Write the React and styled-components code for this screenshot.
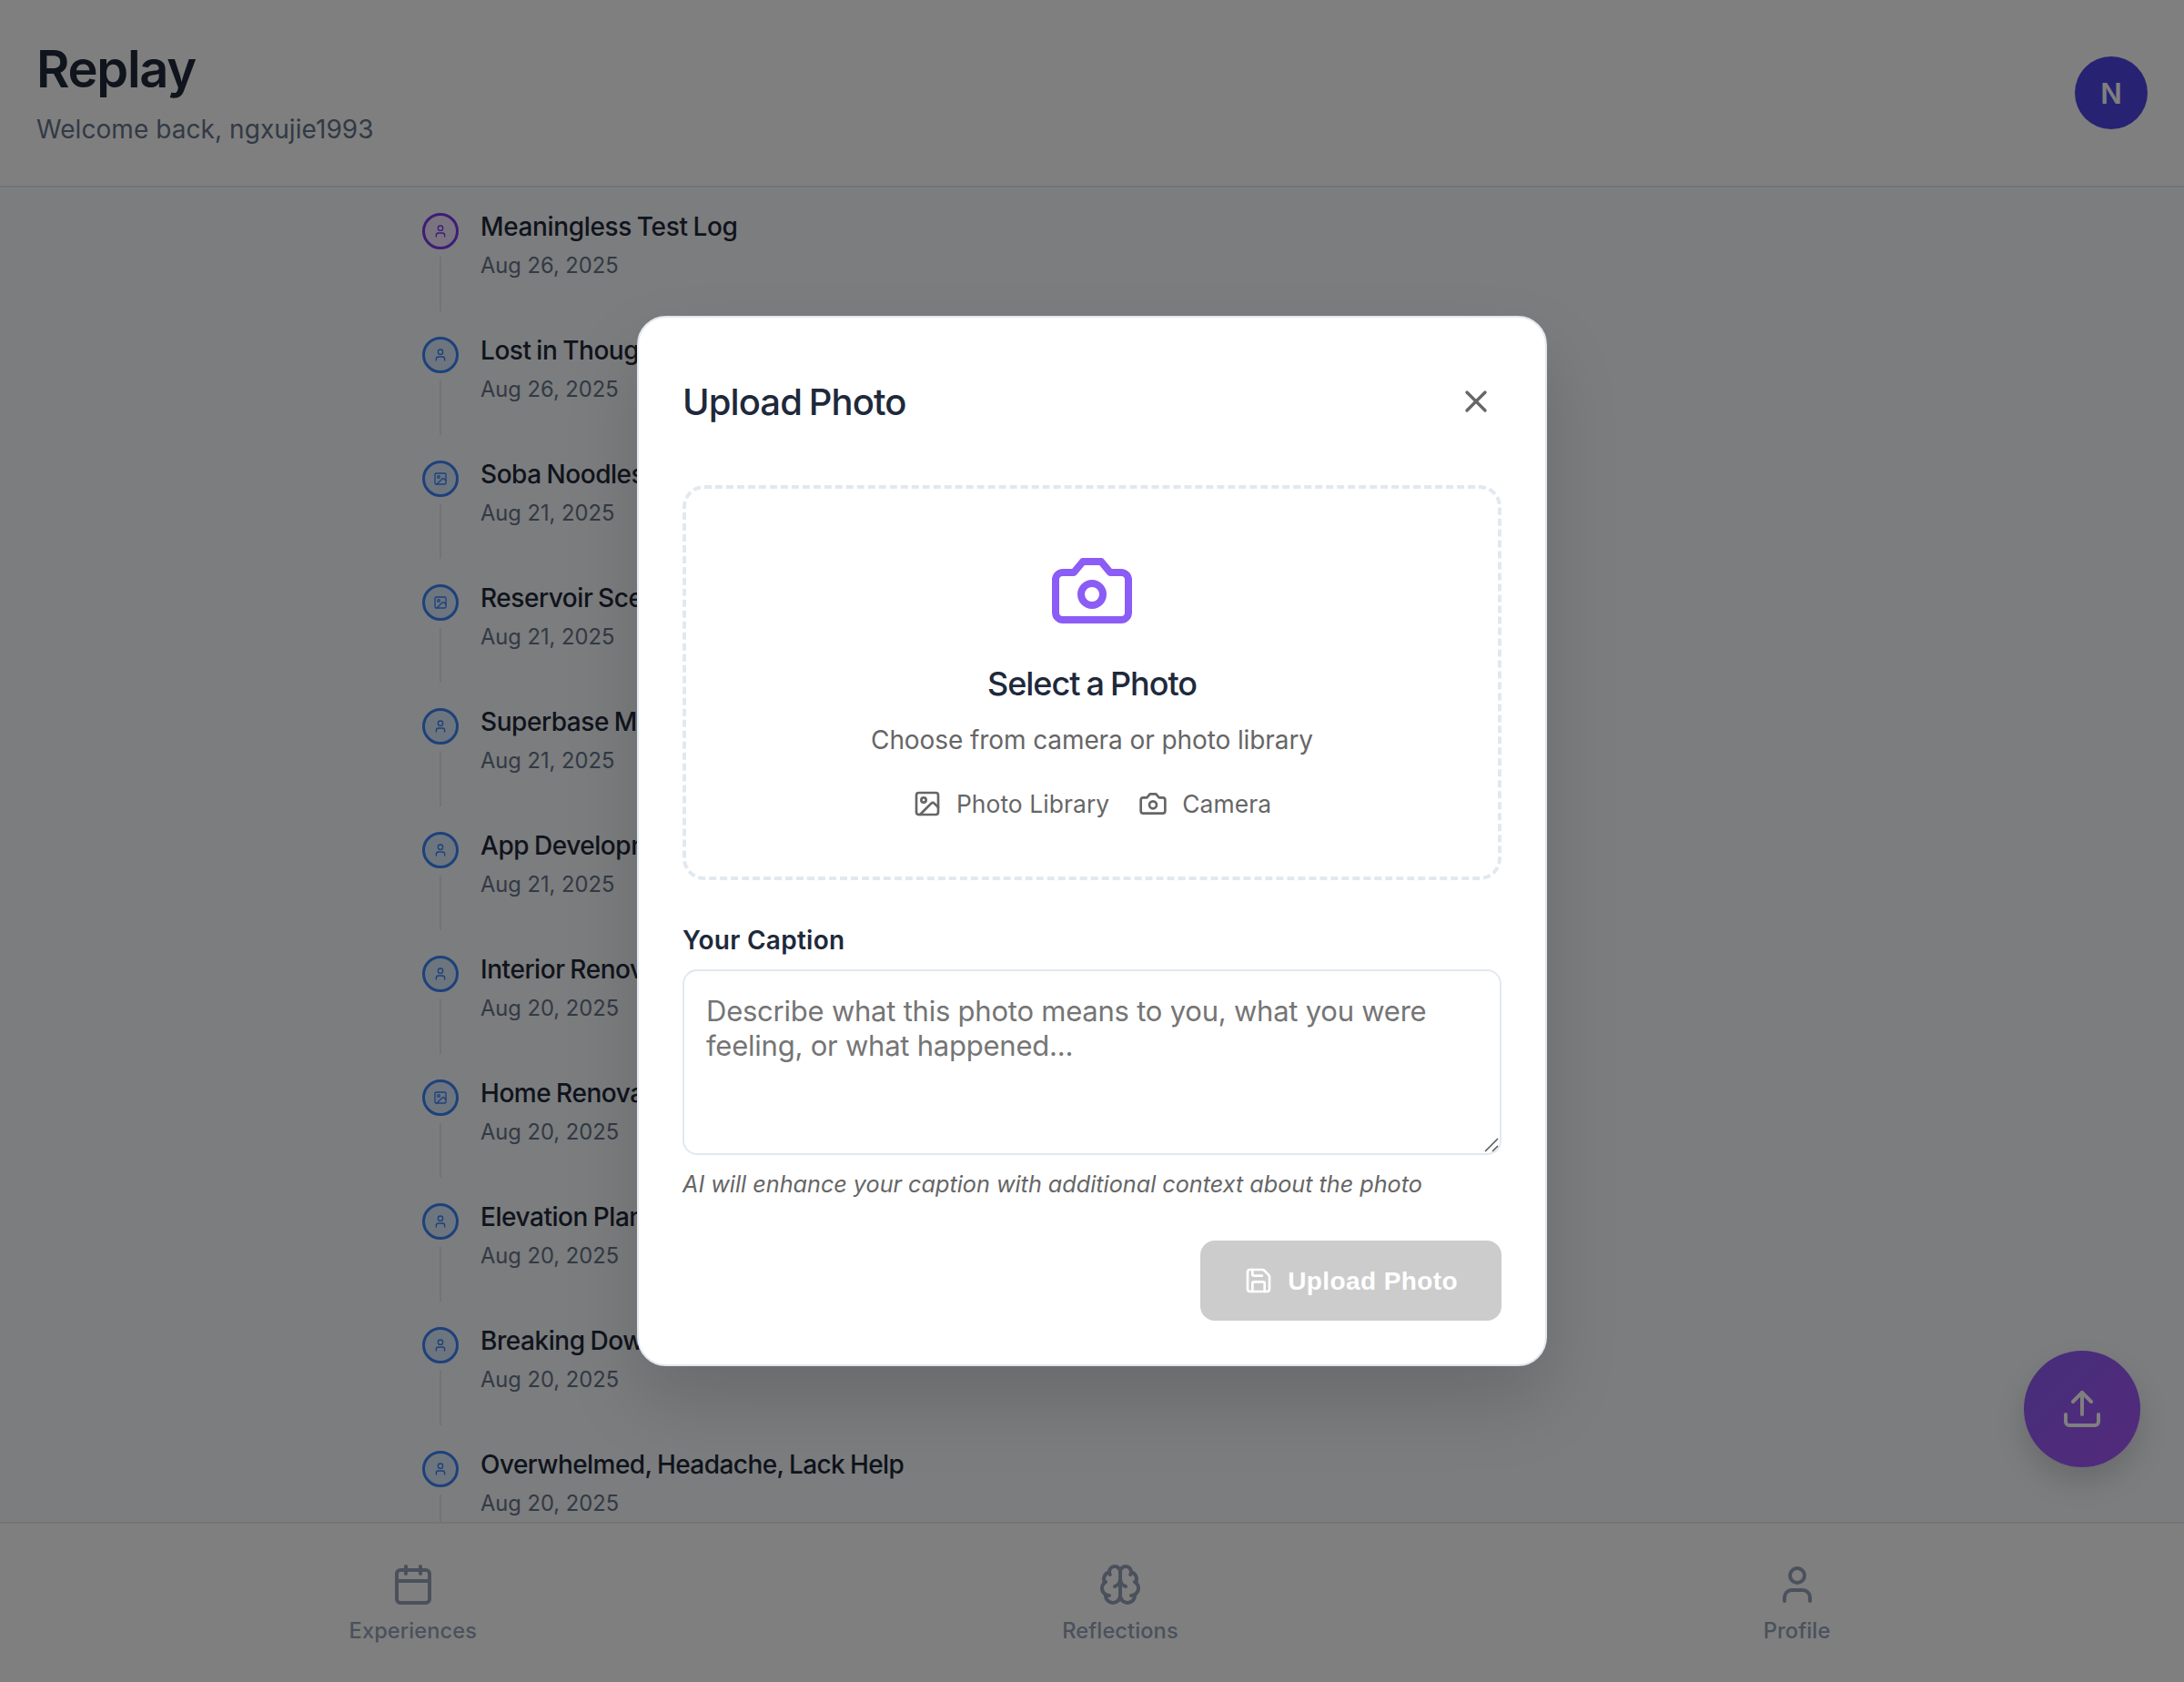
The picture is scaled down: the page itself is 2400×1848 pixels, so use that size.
import React from "react";
import styled, { createGlobalStyle, css } from "styled-components";

const GlobalStyle = createGlobalStyle`
  *, *::before, *::after { box-sizing: border-box; }
  body {
    margin: 0;
    font-family: Inter, "Liberation Sans", sans-serif;
    background: #f8fafc;
    color: #1e293b;
  }
  button { font: inherit; border: 0; background: none; padding: 0; cursor: pointer; }
`;

const Svg = styled.svg`
  display: block;
  flex: none;
  width: ${(p) => p.$size}px;
  height: ${(p) => p.$size}px;
  fill: none;
  stroke: currentColor;
  stroke-width: 2;
  stroke-linecap: round;
  stroke-linejoin: round;
`;

const Icon = ({ size, children }) => (
  <Svg $size={size} viewBox="0 0 24 24" aria-hidden="true">
    {children}
  </Svg>
);

const UserIcon = ({ size }) => (
  <Icon size={size}>
    <path d="M19 21v-2a4 4 0 0 0-4-4H9a4 4 0 0 0-4 4v2" />
    <circle cx="12" cy="7" r="4" />
  </Icon>
);

const ImageIcon = ({ size }) => (
  <Icon size={size}>
    <rect x="3" y="3" width="18" height="18" rx="2" ry="2" />
    <circle cx="9" cy="9" r="2" />
    <path d="m21 15-3.086-3.086a2 2 0 0 0-2.828 0L6 21" />
  </Icon>
);

const CameraIcon = ({ size }) => (
  <Icon size={size}>
    <path d="M14.5 4h-5L7 7H4a2 2 0 0 0-2 2v9a2 2 0 0 0 2 2h16a2 2 0 0 0 2-2V9a2 2 0 0 0-2-2h-3l-2.5-3z" />
    <circle cx="12" cy="13" r="3" />
  </Icon>
);

const CloseIcon = ({ size }) => (
  <Icon size={size}>
    <path d="M18 6 6 18" />
    <path d="m6 6 12 12" />
  </Icon>
);

const SaveIcon = ({ size }) => (
  <Icon size={size}>
    <path d="M15.2 3a2 2 0 0 1 1.4.6l3.8 3.8a2 2 0 0 1 .6 1.4V19a2 2 0 0 1-2 2H5a2 2 0 0 1-2-2V5a2 2 0 0 1 2-2z" />
    <path d="M17 21v-7a1 1 0 0 0-1-1H8a1 1 0 0 0-1 1v7" />
    <path d="M7 3v4a1 1 0 0 0 1 1h7" />
  </Icon>
);

const UploadIcon = ({ size }) => (
  <Icon size={size}>
    <path d="M21 15v4a2 2 0 0 1-2 2H5a2 2 0 0 1-2-2v-4" />
    <path d="m17 8-5-5-5 5" />
    <path d="M12 3v12" />
  </Icon>
);

const CalendarIcon = ({ size }) => (
  <Icon size={size}>
    <path d="M8 2v4" />
    <path d="M16 2v4" />
    <rect x="3" y="4" width="18" height="18" rx="2" />
    <path d="M3 10h18" />
  </Icon>
);

const BrainIcon = ({ size }) => (
  <Icon size={size}>
    <path d="M12 5a3 3 0 1 0-5.997.125 4 4 0 0 0-2.526 5.77 4 4 0 0 0 .556 6.588A4 4 0 1 0 12 18Z" />
    <path d="M12 5a3 3 0 1 1 5.997.125 4 4 0 0 1 2.526 5.77 4 4 0 0 1-.556 6.588A4 4 0 1 1 12 18Z" />
    <path d="M15 13a4.5 4.5 0 0 1-3-4 4.5 4.5 0 0 1-3 4" />
    <path d="M17.599 6.5a3 3 0 0 0 .399-1.375" />
    <path d="M6.003 5.125A3 3 0 0 0 6.401 6.5" />
    <path d="M3.477 10.896a4 4 0 0 1 .585-.396" />
    <path d="M19.938 10.5a4 4 0 0 1 .585.396" />
    <path d="M6 18a4 4 0 0 1-1.967-.516" />
    <path d="M19.967 17.484A4 4 0 0 1 18 18" />
  </Icon>
);

const Screen = styled.div`
  position: relative;
  display: flex;
  flex-direction: column;
  height: 100vh;
  overflow: hidden;
`;

const Header = styled.header`
  display: flex;
  flex: none;
  align-items: center;
  justify-content: space-between;
  height: 206px;
  padding: 0 40px;
  background: #fff;
  border-bottom: 2px solid #e2e8f0;
`;

const Brand = styled.h1`
  margin: 0 0 16px;
  font-size: 56px;
  font-weight: 600;
  line-height: 64px;
  letter-spacing: -1.3px;
`;

const Greeting = styled.p`
  margin: 0;
  color: #64748b;
  font-size: 28px;
  line-height: 36px;
  letter-spacing: 0.06px;
`;

const Avatar = styled.div`
  display: grid;
  place-items: center;
  width: 80px;
  height: 80px;
  border-radius: 50%;
  background: #4f46e5;
  color: #fff;
  font-size: 31px;
  font-weight: 600;
`;

const Main = styled.main`
  flex: 1;
  min-height: 0;
  overflow: hidden;
  padding: 28px 464px 0;
`;

const Timeline = styled.ol`
  margin: 0;
  padding: 0;
  list-style: none;
`;

const Entry = styled.li`
  display: flex;
  gap: 24px;
  height: 136px;
`;

const Rail = styled.div`
  display: flex;
  flex-direction: column;
  align-items: center;
  gap: 8px;
`;

const Marker = styled.span`
  display: grid;
  place-items: center;
  width: 40px;
  height: 40px;
  border: 3px solid;
  border-radius: 50%;
  ${(p) =>
    p.$tone === "purple"
      ? css`
          border-color: #7c3aed;
          background: #f3e8ff;
          color: #7c3aed;
        `
      : css`
          border-color: #3b82f6;
          background: #dbeafe;
          color: #3b82f6;
        `}
`;

const Stem = styled.span`
  width: 2px;
  height: 60px;
  background: #e5e7eb;
`;

const EntryTitle = styled.h2`
  margin: 0 0 13px;
  font-size: 28px;
  font-weight: 500;
  line-height: 30px;
  letter-spacing: ${(p) => p.$tracking}px;
  word-spacing: -1.2px;
  white-space: nowrap;
`;

const EntryDate = styled.time`
  display: block;
  color: #64748b;
  font-size: 23.7px;
  line-height: 30px;
`;

const Tabs = styled.nav`
  display: flex;
  flex: none;
  justify-content: space-around;
  height: 176px;
  padding: 43px 67px 0 62px;
  background: #fff;
  border-top: 2px solid #e2e8f0;
`;

const Tab = styled.button`
  display: flex;
  flex-direction: column;
  align-items: center;
  gap: 12px;
  height: 90px;
  color: #94a3b8;
  font-size: 23.6px;
  font-weight: 500;
  line-height: 30px;
  letter-spacing: 0.1px;
`;

const UploadFab = styled.button`
  position: absolute;
  right: 48px;
  bottom: 236px;
  display: grid;
  place-items: center;
  width: 128px;
  height: 128px;
  border-radius: 50%;
  background: linear-gradient(135deg, #8b5cf6, #a855f7);
  box-shadow: 0 16px 32px rgba(0, 0, 0, 0.15);
  color: #fff;
`;

const Backdrop = styled.div`
  position: absolute;
  inset: 0;
  display: grid;
  place-items: center;
  background: rgba(0, 0, 0, 0.5);
`;

const Dialog = styled.section`
  width: 1000px;
  padding: 48px;
  border: 2px solid #e2e8f0;
  border-radius: 32px;
  background: #fff;
  box-shadow: 0 40px 80px rgba(0, 0, 0, 0.15);
`;

const DialogHeader = styled.div`
  display: flex;
  align-items: center;
  justify-content: space-between;
  margin-bottom: 48px;
  padding: 16px 0;
`;

const DialogTitle = styled.h2`
  margin: 0;
  padding-top: 2px;
  font-size: 40px;
  font-weight: 500;
  line-height: 54px;
  letter-spacing: -0.9px;
  word-spacing: -2px;
`;

const CloseButton = styled.button`
  display: grid;
  place-items: center;
  width: 56px;
  height: 56px;
  color: #666;
`;

const DropZone = styled.div`
  display: flex;
  flex-direction: column;
  align-items: center;
  height: 434px;
  padding: 64px;
  border: 4px dashed #e2e8f0;
  border-radius: 24px;
  color: #8b5cf6;
`;

const DropTitle = styled.h3`
  margin: 32px 0 21px;
  color: #1e293b;
  font-size: 36px;
  font-weight: 500;
  line-height: 44px;
  letter-spacing: -1px;
  word-spacing: -1.6px;
`;

const DropHint = styled.p`
  margin: 0 0 35px;
  color: #666;
  font-size: 28px;
  line-height: 38px;
  letter-spacing: -0.09px;
`;

const Sources = styled.div`
  display: flex;
  gap: 32px;
`;

const Source = styled.span`
  display: flex;
  align-items: center;
  gap: 16px;
  color: #666;
  font-size: 26.4px;
  line-height: 32px;
  letter-spacing: 0.08px;
`;

const Label = styled.label`
  display: block;
  margin: 49px 0 15px;
  font-size: 28px;
  font-weight: 600;
  line-height: 34px;
  letter-spacing: 0.27px;
`;

const Field = styled.div`
  position: relative;
`;

const CaptionInput = styled.textarea`
  display: block;
  width: 100%;
  height: 204px;
  padding: 25px 24px 24px;
  border: 2px solid #e2e8f0;
  border-radius: 16px;
  outline: 0;
  resize: none;
  overflow: hidden;
  background: #fff;
  color: #1e293b;
  font-family: inherit;
  font-size: 31px;
  line-height: 38px;
  letter-spacing: -0.23px;

  &::placeholder {
    color: #757575;
    opacity: 1;
  }
`;

const ResizeGrip = styled.svg`
  position: absolute;
  right: 3px;
  bottom: 3px;
  width: 16px;
  height: 16px;
  fill: none;
  stroke: #555;
  stroke-width: 1.5;
`;

const Note = styled.p`
  margin: 16px 0 46px;
  color: #666;
  font-size: 25.2px;
  font-style: italic;
  line-height: 32px;
`;

const Actions = styled.div`
  display: flex;
  justify-content: flex-end;
`;

const SubmitButton = styled.button`
  && {
    display: flex;
    align-items: center;
    gap: 16px;
    height: 88px;
    padding: 0 48px;
    border-radius: 16px;
    background: #ccc;
    color: #fff;
    font-family: "Liberation Sans", Arial, sans-serif;
    font-size: 28px;
    font-weight: 700;
    letter-spacing: 0.4px;
  }
`;

const SubmitText = styled.span`
  padding-top: 2px;
`;

const entries = [
  { title: "Meaningless Test Log", date: "Aug 26, 2025", tone: "purple", tracking: -0.36 },
  { title: "Lost in Thought", date: "Aug 26, 2025" },
  { title: "Soba Noodles", date: "Aug 21, 2025", photo: true },
  { title: "Reservoir Scene", date: "Aug 21, 2025", photo: true },
  { title: "Superbase MCP", date: "Aug 21, 2025" },
  { title: "App Development", date: "Aug 21, 2025" },
  { title: "Interior Renovation", date: "Aug 20, 2025" },
  { title: "Home Renovation", date: "Aug 20, 2025", photo: true },
  { title: "Elevation Plan", date: "Aug 20, 2025" },
  { title: "Breaking Down", date: "Aug 20, 2025" },
  { title: "Overwhelmed, Headache, Lack Help", date: "Aug 20, 2025", tracking: -0.56 },
];

const tabs = [
  { label: "Experiences", Glyph: CalendarIcon },
  { label: "Reflections", Glyph: BrainIcon },
  { label: "Profile", Glyph: UserIcon },
];

function TimelineEntry({ title, date, photo, tone, tracking = -0.45 }) {
  return (
    <Entry>
      <Rail>
        <Marker $tone={tone}>{photo ? <ImageIcon size={16} /> : <UserIcon size={16} />}</Marker>
        <Stem />
      </Rail>
      <div>
        <EntryTitle $tracking={tracking}>{title}</EntryTitle>
        <EntryDate>{date}</EntryDate>
      </div>
    </Entry>
  );
}

function UploadDialog() {
  return (
    <Backdrop>
      <Dialog role="dialog" aria-labelledby="upload-title">
        <DialogHeader>
          <DialogTitle id="upload-title">Upload Photo</DialogTitle>
          <CloseButton aria-label="Close">
            <CloseIcon size={40} />
          </CloseButton>
        </DialogHeader>
        <DropZone>
          <CameraIcon size={96} />
          <DropTitle>Select a Photo</DropTitle>
          <DropHint>Choose from camera or photo library</DropHint>
          <Sources>
            <Source>
              <ImageIcon size={32} />
              Photo Library
            </Source>
            <Source>
              <CameraIcon size={32} />
              Camera
            </Source>
          </Sources>
        </DropZone>
        <Label htmlFor="caption">Your Caption</Label>
        <Field>
          <CaptionInput
            id="caption"
            placeholder="Describe what this photo means to you, what you were feeling, or what happened..."
          />
          <ResizeGrip viewBox="0 0 16 16" aria-hidden="true">
            <path d="M1 15 15 1M9 15l6-6" />
          </ResizeGrip>
        </Field>
        <Note>AI will enhance your caption with additional context about the photo</Note>
        <Actions>
          <SubmitButton>
            <SaveIcon size={32} />
            <SubmitText>Upload Photo</SubmitText>
          </SubmitButton>
        </Actions>
      </Dialog>
    </Backdrop>
  );
}

export default function App() {
  return (
    <Screen>
      <GlobalStyle />
      <Header>
        <div>
          <Brand>Replay</Brand>
          <Greeting>Welcome back, ngxujie1993</Greeting>
        </div>
        <Avatar>N</Avatar>
      </Header>
      <Main>
        <Timeline>
          {entries.map((entry) => (
            <TimelineEntry key={entry.title} {...entry} />
          ))}
        </Timeline>
      </Main>
      <Tabs>
        {tabs.map(({ label, Glyph }) => (
          <Tab key={label}>
            <Glyph size={48} />
            {label}
          </Tab>
        ))}
      </Tabs>
      <UploadFab aria-label="Upload">
        <UploadIcon size={48} />
      </UploadFab>
      <UploadDialog />
    </Screen>
  );
}
